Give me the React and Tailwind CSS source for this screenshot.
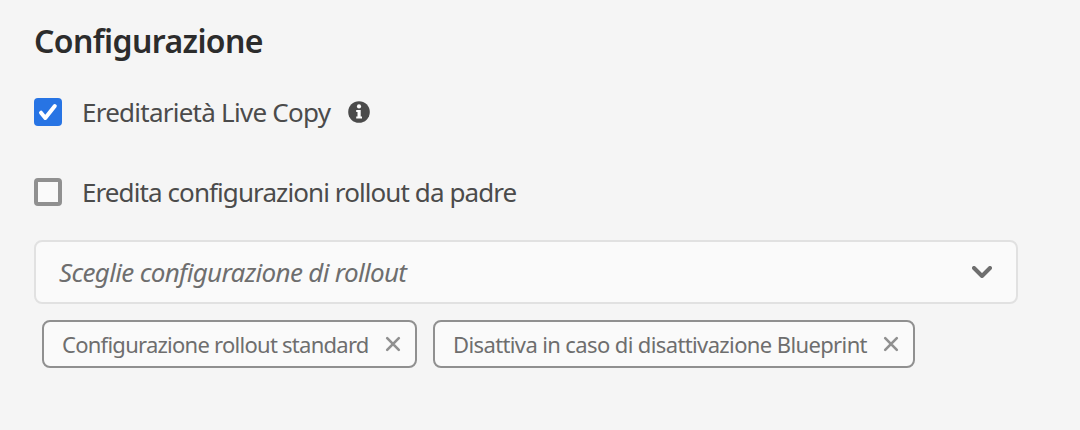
function Check({ checked }) {
  return checked ? (
    <span className="flex h-7 w-7 shrink-0 items-center justify-center rounded-[4px] bg-[#2774e4]">
      <svg className="h-7 w-7" viewBox="0 0 28 28" fill="none" stroke="#fff" strokeWidth="4" strokeLinecap="round" strokeLinejoin="round">
        <path d="M7 14.7L11.3 20L20.8 8" />
      </svg>
    </span>
  ) : (
    <span className="h-7 w-7 shrink-0 rounded-[4px] border-4 border-[#909090] bg-[#fafafa]" />
  );
}

function Tag({ children, className, textClass }) {
  return (
    <div className={`flex h-12 shrink-0 items-center rounded-[8px] border-2 border-[#909090] bg-[#fafafa] pl-[18px] text-[#6e6e6e] ${className}`}>
      <span className={`whitespace-nowrap text-[22px] leading-[30px] ${textClass}`}>{children}</span>
      <svg className="mr-[14px] ml-auto h-4 w-4 shrink-0" viewBox="0 0 16 16" fill="none" stroke="#909090" strokeWidth="2.6" strokeLinecap="round">
        <path d="M2.2 2.2L13.8 13.8M13.8 2.2L2.2 13.8" />
      </svg>
    </div>
  );
}

export default function App() {
  return (
    <main className="h-[430px] w-[1080px] overflow-hidden bg-[#f5f5f5] pl-[34px] font-['Noto_Sans',sans-serif] text-[26px] text-[#4b4b4b]">
      <h1 className="pt-[21px] text-[32px] leading-[40px] font-semibold tracking-[-0.6px] text-[#2c2c2c]">Configurazione</h1>
      <label className="mt-[31px] flex h-10 items-center gap-5">
        <Check checked />
        <span className="w-[246px] whitespace-nowrap leading-[36px] tracking-[-0.75px]">Ereditarietà Live Copy</span>
        <svg className="h-[22px] w-[22px] shrink-0" viewBox="0 0 22 22">
          <circle cx="11" cy="11" r="10.8" fill="#4b4b4b" />
          <circle cx="11" cy="5.4" r="2.1" fill="#fff" />
          <path d="M8.2 9H12.7V15.4H14V17.4H8.2V15.4H9.5V11H8.2Z" fill="#fff" />
        </svg>
      </label>
      <label className="mt-10 flex h-10 items-center gap-5">
        <Check />
        <span className="whitespace-nowrap leading-[36px] tracking-[-0.91px]">Eredita configurazioni rollout da padre</span>
      </label>
      <div className="mt-7 flex h-16 w-[984px] items-center justify-between rounded-[8px] border-2 border-[#e1e1e1] bg-[#fafafa] pr-6 pl-[23px]">
        <span className="whitespace-nowrap leading-[36px] tracking-[-0.68px] text-[#6e6e6e] italic">Sceglie configurazione di rollout</span>
        <svg className="h-3 w-5" viewBox="0 0 20 12" fill="none" stroke="#6e6e6e" strokeWidth="4" strokeLinecap="round" strokeLinejoin="round">
          <path d="M2 2L10 10L18 2" />
        </svg>
      </div>
      <div className="mt-4 flex gap-4 pl-2">
        <Tag className="w-[375px]" textClass="tracking-[-0.74px]">Configurazione rollout standard</Tag>
        <Tag className="w-[482px]" textClass="tracking-[-0.62px]">Disattiva in caso di disattivazione Blueprint</Tag>
      </div>
    </main>
  );
}
